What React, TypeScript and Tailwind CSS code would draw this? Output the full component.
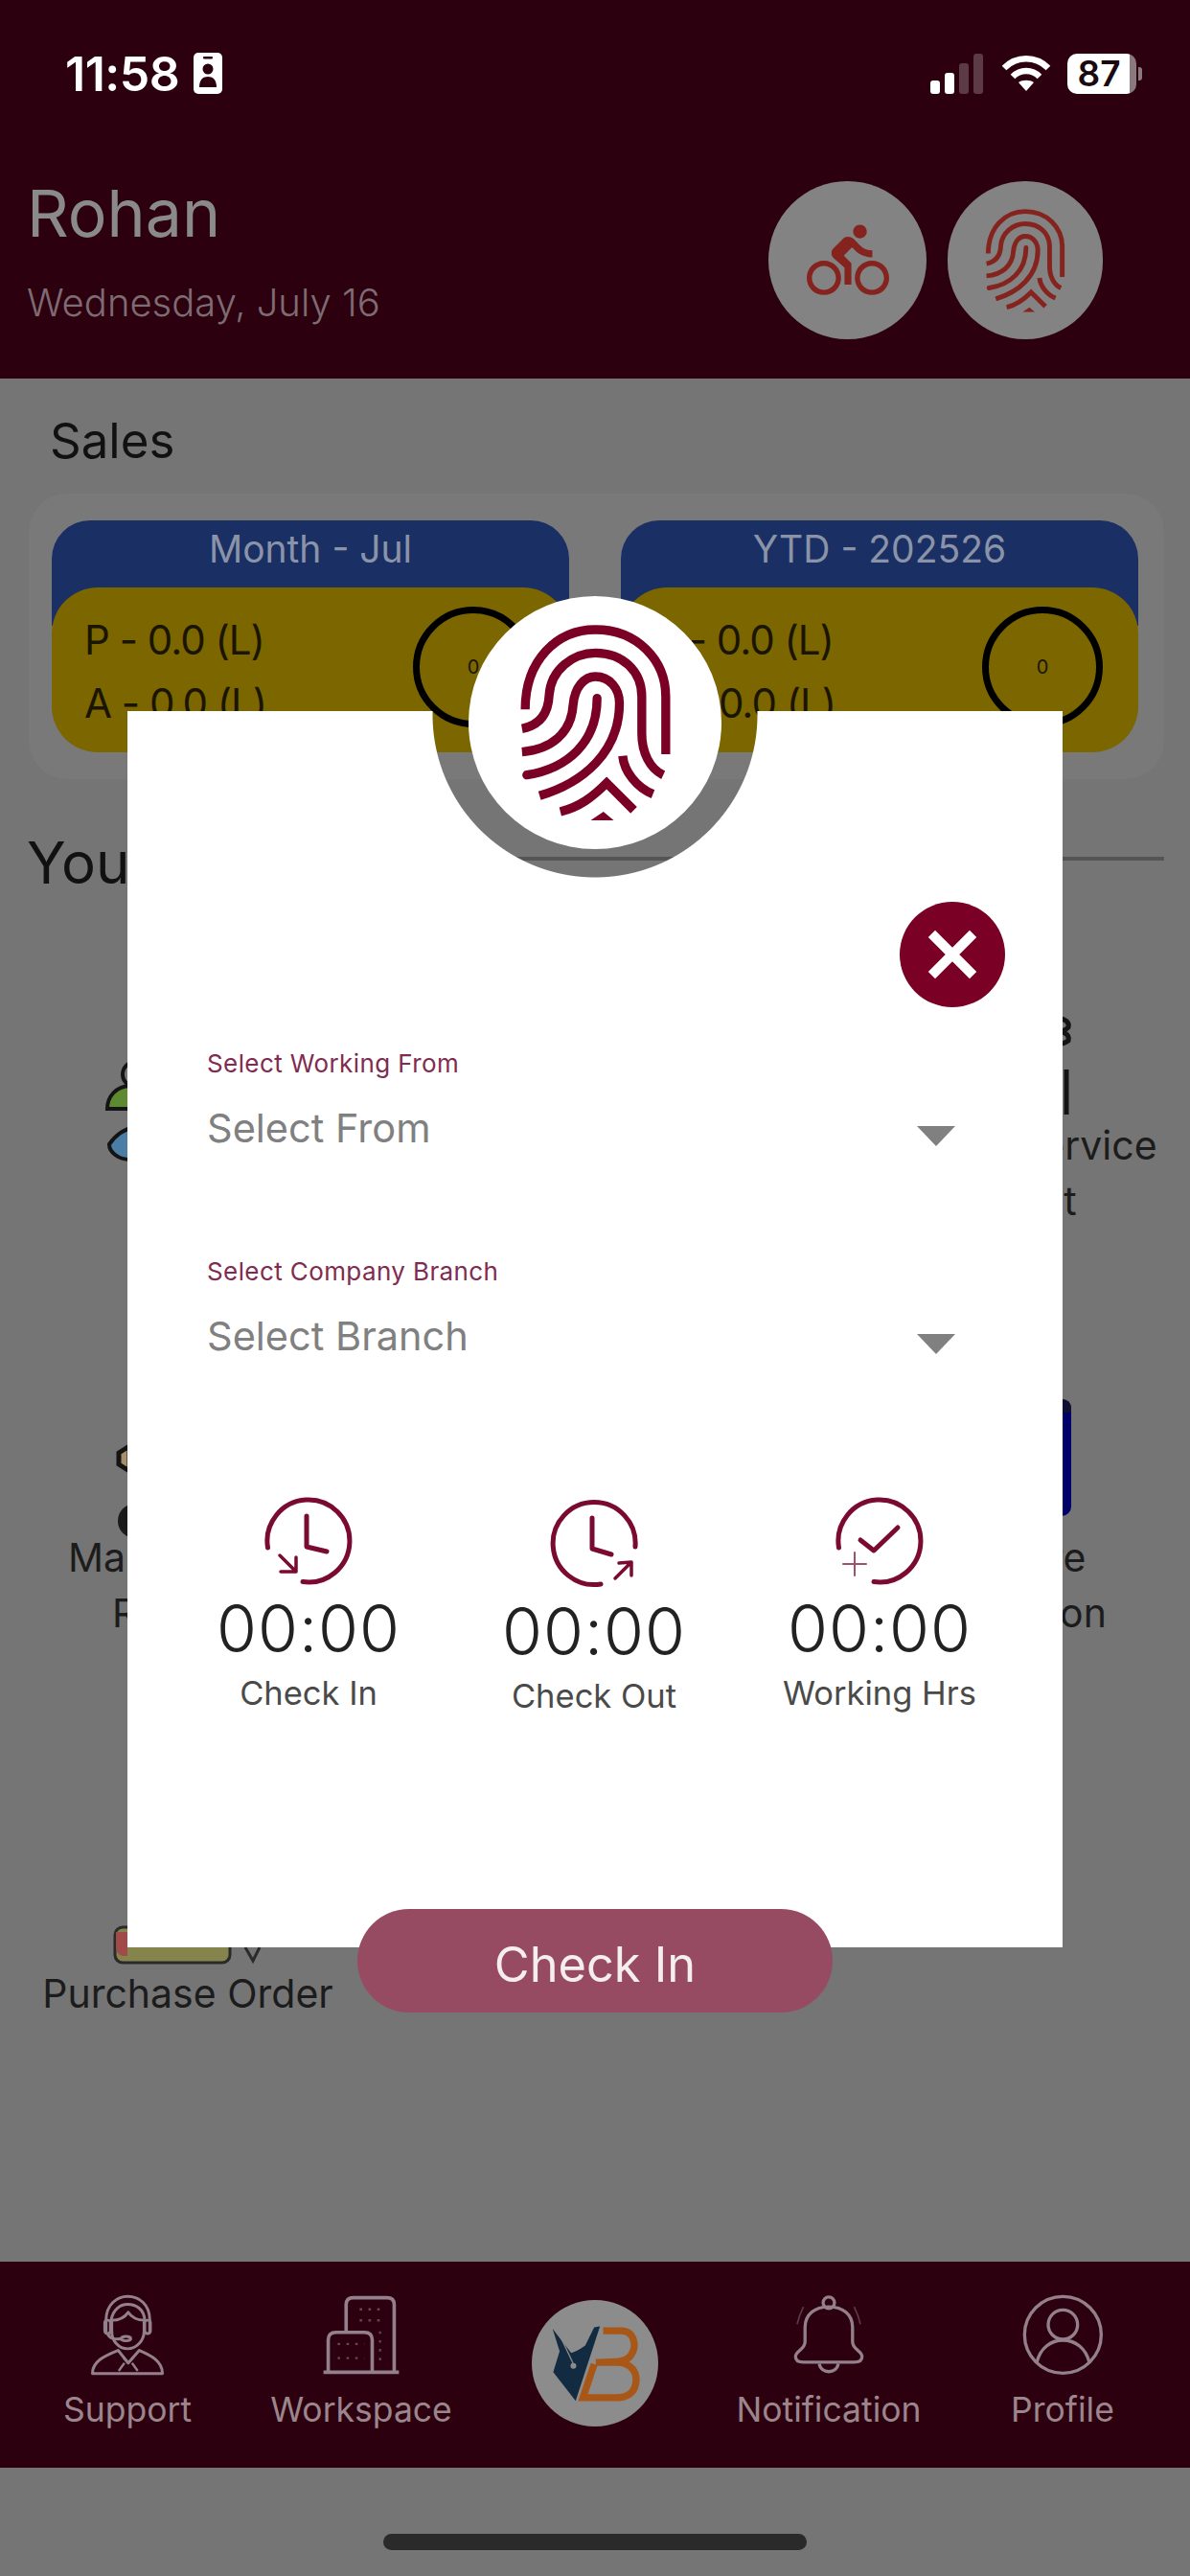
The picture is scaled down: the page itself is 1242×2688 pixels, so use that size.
import React from "react";
import { MdDirectionsBike } from "react-icons/md";

function Fingerprint({ color, className }: { color: string; className: string }) {
  return (
    <svg viewBox="305 120 470 615" className={className} fill="none" stroke={color} strokeWidth={28}>
      <path d="M320 385 C320 230 420 135 540 135 C670 135 760 230 760 345 V525" />
      <path d="M310 445 C365 435 392 400 395 340 C400 260 470 208 540 208 C625 208 685 265 685 345 V460 C685 520 710 570 752 590" />
      <path d="M310 518 C400 510 465 460 470 370 C475 315 505 282 540 282 C585 282 615 320 615 365 C615 520 500 615 365 655" />
      <path d="M325 590 C450 570 545 490 545 350" strokeLinecap="round" />
      <path d="M625 530 C630 580 670 630 720 650" />
      <path d="M430 705 C490 690 530 660 575 615 L660 700" />
      <path d="M525 732 L565 705 L597 732 Z" fill={color} stroke="none" />
    </svg>
  );
}

function ClockIn() {
  return (
    <svg viewBox="0 0 92 92" className="w-[92px] h-[92px]" fill="none" stroke="#7a0a32" strokeWidth={5} strokeLinecap="round" strokeLinejoin="round">
      <path d="M3.5 53 A43 43 0 1 1 40 88.6" />
      <path d="M44 20 V52 L65 57" />
      <path d="M16 61 L33 78 M17 78 H33 V63" strokeWidth={3.5} />
    </svg>
  );
}
function ClockOut() {
  return (
    <svg viewBox="0 0 92 92" className="w-[92px] h-[92px]" fill="none" stroke="#7a0a32" strokeWidth={5} strokeLinecap="round" strokeLinejoin="round">
      <path d="M89 49 A43 43 0 1 0 53 88" />
      <path d="M44 19 V51 L64 57" />
      <path d="M68 82 L85 65 M72 66 L85 65 V79" strokeWidth={3.5} />
    </svg>
  );
}
function ClockCheck() {
  return (
    <svg viewBox="0 0 92 92" className="w-[92px] h-[92px]" fill="none" stroke="#7a0a32" strokeWidth={5} strokeLinecap="round" strokeLinejoin="round">
      <path d="M3.5 53 A43 43 0 1 1 40 88.6" />
      <path d="M26 45 L40 56 L65 32" />
      <path d="M20 58 V82 M8 70 H32" strokeWidth={2} stroke="#a0506c" />
    </svg>
  );
}

const navStroke = "#94808a";

function SupportIcon() {
  return (
    <svg viewBox="190 65 235 260" className="w-[78px] h-[86px]" fill="none" stroke={navStroke} strokeWidth={9} strokeLinejoin="round">
      <path d="M240 190 V150 C240 100 275 75 308 75 C345 75 378 100 378 150 V190" />
      <path d="M256 150 C262 115 285 100 308 100 C335 100 360 115 362 150" />
      <path d="M258 150 C280 150 300 140 310 125 C320 140 340 150 360 150 V185 C360 215 335 240 308 240 C280 240 258 215 258 185 Z" />
      <rect x="236" y="150" width="18" height="42" rx="8" />
      <rect x="362" y="150" width="18" height="42" rx="8" />
      <path d="M245 192 C250 208 270 212 290 208" />
      <ellipse cx="303" cy="208" rx="15" ry="7" />
      <path d="M197 318 C197 280 235 262 278 245 L310 285 L345 245 C385 262 418 280 418 318 Z" />
      <path d="M295 268 L310 285 L325 268 M298 285 L280 310 M322 285 L340 310" strokeWidth={7} />
    </svg>
  );
}
function WorkspaceIcon() {
  return (
    <svg viewBox="915 65 250 260" className="w-[82px] h-[86px]" fill="none" stroke={navStroke} strokeWidth={11}>
      <path d="M992 185 V100 Q992 78 1015 78 H1122 Q1145 78 1145 100 V312" />
      <path d="M935 312 V212 Q935 188 960 188 H1050 Q1075 188 1075 212 V312" />
      <path d="M920 315 H1160" strokeWidth={12} />
      <path d="M1035 115 H1115 M1035 150 H1115 M1100 185 V290 M965 225 H1050 M965 270 H1050" strokeWidth={7} strokeDasharray="8 20" opacity={0.55} />
    </svg>
  );
}
function BellIcon() {
  return (
    <svg viewBox="200 65 230 255" className="w-[76px] h-[86px]" fill="none" stroke={navStroke} strokeWidth={10} strokeLinejoin="round">
      <circle cx="315" cy="92" r="18" />
      <path d="M240 215 C240 240 210 245 210 262 C210 275 220 280 235 280 H395 C410 280 420 275 420 262 C420 245 390 240 390 215 V170 C390 130 360 105 315 105 C270 105 240 130 240 170 Z" />
      <path d="M285 285 C290 318 340 318 345 285" />
      <path d="M215 160 Q222 130 235 105 M415 160 Q408 130 395 105" strokeWidth={5} opacity={0.45} />
    </svg>
  );
}
function ProfileIcon() {
  return (
    <svg viewBox="920 70 255 255" className="w-[85px] h-[85px]" fill="none" stroke={navStroke} strokeWidth={10}>
      <circle cx="1047" cy="197" r="120" />
      <circle cx="1047" cy="165" r="46" />
      <path d="M965 285 C975 238 1010 214 1047 214 C1085 214 1120 238 1130 285" />
    </svg>
  );
}
function Logo() {
  return (
    <div className="w-[132px] h-[132px] rounded-full bg-[#8c8c8c] flex items-center justify-center">
      <svg viewBox="105 90 395 395" className="w-[132px] h-[132px]">
        <path d="M170 180 L228 255 C245 250 262 240 272 232 L300 175 L318 172 L242 405 L172 315 L192 250 Z" fill="#122b40" />
        <path d="M190 195 L235 290" stroke="#8c8c8c" strokeWidth={4} />
        <circle cx="235" cy="296" r="9" fill="#8c8c8c" />
        <path d="M328 186 H385 C425 186 435 235 415 262 C400 283 380 285 305 285 M305 285 H370 C420 285 435 320 430 350 C425 385 395 395 370 395 H265 L300 290" fill="none" stroke="#a95716" strokeWidth={22} />
      </svg>
    </div>
  );
}

function PeopleIcon() {
  return (
    <svg viewBox="0 0 170 130" className="w-[170px] h-[130px] overflow-visible" fill="none" stroke="#141414" strokeWidth={4}>
      <circle cx="30" cy="85" r="13" />
      <path d="M1 121 C1 108 10 98 24 97 H60 V121 Z" fill="#5d8a30" />
      <path d="M3 158 C10 148 18 142 30 140 L60 140 V174 H25 C12 174 3 166 3 158 Z" fill="#4a7ea5" />
    </svg>
  );
}
function MaintIcon() {
  return (
    <svg viewBox="0 0 170 130" className="w-[170px] h-[130px] overflow-visible">
      <path d="M13 50 L24 43 V69 L13 62 Z" fill="#a5906a" stroke="#141414" strokeWidth={5} />
      <circle cx="30" cy="121" r="18" fill="#1a1a1a" />
    </svg>
  );
}
function PurchaseIcon() {
  return (
    <svg viewBox="0 0 170 130" className="w-[170px] h-[130px]" fill="none">
      <rect x="9" y="90" width="120" height="37" rx="8" fill="#84844c" stroke="#2a2a2a" strokeWidth={3} />
      <path d="M10 95 H22 V120 H17 Q10 118 10 110 Z" fill="#a04a4a" />
      <path d="M145 111 L153 125 L160 111" stroke="#2a2a2a" strokeWidth={3} />
    </svg>
  );
}
function ServiceIcon() {
  return (
    <svg viewBox="0 0 170 130" className="w-[170px] h-[130px]" fill="none" stroke="#141414" strokeWidth={5}>
      <path d="M106 26 Q120 28 118 36 Q114 40 108 40 Q120 42 118 50 Q112 54 106 54" />
      <path d="M116 80 V127" />
    </svg>
  );
}
function BlueIcon() {
  return (
    <svg viewBox="0 0 170 130" className="w-[170px] h-[130px] overflow-visible">
      <rect x="40" y="-6" width="81" height="122" rx="10" fill="#00006b" />
      <path d="M100 -6 H111 Q121 -6 121 4 V8 H100 Z" fill="#101030" />
    </svg>
  );
}

function SalesCard({ title, gauge }: { title: string; gauge: string }) {
  return (
    <div className="w-[540px] h-[242px] flex flex-col">
      <div className="h-[110px] rounded-t-[40px] bg-[#1a2f63] flex items-start justify-center pt-[11px] text-[39px] leading-[38px] text-[#8a93a8]">{title}</div>
      <div className="mt-[-40px] flex-1 rounded-[48px] bg-[#7c6600] flex items-center justify-between pl-[34px] pr-[37px] text-[#1a1500]">
        <div className="flex flex-col gap-[20px] text-[42px] leading-[46px] tracking-[-1px] mt-[4px]">
          <div>P - 0.0 (L)</div>
          <div>A - 0.0 (L)</div>
        </div>
        <div className="w-[126px] h-[126px] rounded-full border-[7px] border-black flex items-center justify-center text-[20px] mb-[6px]">{gauge}</div>
      </div>
    </div>
  );
}

function GridItem({ icon, lines }: { icon: React.ReactNode; lines: string[] }) {
  return (
    <div className="flex flex-col items-center text-center text-[41px] leading-[58px] text-[#1c1c1c]">
      <div className="h-[130px]">{icon}</div>
      {lines.map((l) => (
        <div key={l} className="whitespace-nowrap">{l}</div>
      ))}
    </div>
  );
}

function NavItem({ icon, label }: { icon: React.ReactNode; label: string }) {
  return (
    <div className="flex flex-col items-center pt-[33px]">
      <div className="h-[86px] flex items-center">{icon}</div>
      <div className="mt-[14px] text-[35.5px] leading-[44px] text-[#9a868c]">{label}</div>
    </div>
  );
}

function TimeCol({ icon, time, label, offset }: { icon: React.ReactNode; time: string; label: string; offset: string }) {
  return (
    <div className={`flex flex-col items-center ${offset}`}>
      {icon}
      <div className="mt-[10px] text-[68px] leading-[70px] font-light text-[#222] tracking-[1px]">{time}</div>
      <div className="mt-[13px] text-[34.5px] leading-[40px] text-[#4a4a4a]">{label}</div>
    </div>
  );
}

function SelectField({ label, value }: { label: string; value: string }) {
  return (
    <div className="pl-[83px] pr-[112px]">
      <div className="text-[26px] leading-[30px] tracking-[0.4px] text-[#7f2c50]">{label}</div>
      <div className="mt-[27px] flex items-center justify-between">
        <div className="text-[41.5px] leading-[50px] text-[#808080]">{value}</div>
        <div className="mt-[16px] w-0 h-0 border-l-[20px] border-r-[20px] border-t-[21px] border-l-transparent border-r-transparent border-t-[#808080]" />
      </div>
    </div>
  );
}

export default function App() {
  return (
    <div className="relative w-[1242px] h-[2688px] overflow-hidden bg-[#757575] flex flex-col font-['Inter',sans-serif]">
      <header className="h-[395px] shrink-0 bg-[#2d0010]">
        <div className="h-[43px] mt-[55px] pl-[68px] pr-[50px] flex items-center justify-between text-white">
          <div className="flex items-center gap-[15px]">
            <span className="text-[50px] leading-none font-semibold tracking-[-0.5px]">11:58</span>
            <svg viewBox="0 0 30 43" className="w-[30px] h-[43px]">
              <rect width="30" height="43" rx="5" fill="#fff" />
              <rect x="10" y="4" width="10" height="2.5" rx="1" fill="#2d0010" />
              <circle cx="15" cy="17" r="5.5" fill="#2d0010" />
              <path d="M6 36 C6 28 10 25 15 25 C20 25 24 28 24 36 Z" fill="#2d0010" />
            </svg>
          </div>
          <div className="flex items-center gap-[17px]">
            <svg viewBox="0 0 57 42" className="w-[57px] h-[42px]">
              <rect x="0" y="28" width="10" height="14" rx="3" fill="#fff" />
              <rect x="15" y="20" width="10" height="22" rx="3" fill="#fff" />
              <rect x="30" y="10" width="10" height="32" rx="3" fill="#5c3a46" />
              <rect x="45" y="0" width="10" height="42" rx="3" fill="#5c3a46" />
            </svg>
            <svg viewBox="0 0 52 40" className="w-[52px] h-[40px]" fill="none" stroke="#fff" strokeWidth={6.5}>
              <path d="M3 14 C16 1 36 1 49 14" />
              <path d="M12 23 C20 15 32 15 40 23" />
              <path d="M26 38 L18 29 C22 26 30 26 34 29 Z" fill="#fff" stroke="none" />
            </svg>
            <div className="flex items-center">
              <div className="w-[72px] h-[42px] rounded-[10px] bg-[linear-gradient(90deg,#fff_90%,#8a7a80_90%)] flex items-center justify-center text-[#1a0a10] text-[37px] leading-none font-semibold pr-[6px]">87</div>
              <div className="ml-[2px] w-[4px] h-[14px] rounded-r-[3px] bg-[#8a7a80]" />
            </div>
          </div>
        </div>
        <div className="mt-[89px] pl-[28px] pr-[91px] flex justify-between">
          <div>
            <div className="text-[68px] leading-[70px] text-[#8a8a8a]">Rohan</div>
            <div className="mt-[34px] text-[40px] leading-[50px] font-light text-[#7d6c72]">Wednesday, July 16</div>
          </div>
          <div className="flex gap-[22px] mt-[2px]">
            <div className="w-[165px] h-[165px] rounded-full bg-[#838383] flex items-center justify-center">
              <MdDirectionsBike className="w-[86px] h-[86px] text-[#85241f]" />
            </div>
            <div className="w-[162px] h-[165px] rounded-full bg-[#838383] flex items-center justify-center">
              <Fingerprint color="#85241f" className="w-[84px] h-[108px]" />
            </div>
          </div>
        </div>
      </header>

      <main className="flex-1 min-h-0">
        <div className="pt-[35px] pl-[52px] text-[51px] leading-[60px] text-[#111]">Sales</div>
        <div className="mt-[25px] ml-[30px] mr-[27px] h-[298px] rounded-[40px] bg-[#797979] pt-[28px] pl-[24px] pr-[27px] flex justify-between">
          <SalesCard title="Month - Jul" gauge="0" />
          <SalesCard title="YTD - 202526" gauge="0" />
        </div>
        <div className="mt-[51px] pl-[28px] pr-[27px] flex items-center gap-[20px]">
          <div className="text-[60px] leading-[72px] text-[#111]">Your Services</div>
          <div className="flex-1 h-[4px] bg-[#555] mb-[8px]" />
        </div>
        <div className="pl-[20px] pt-[100px] grid grid-cols-[352px_352px_352px] grid-rows-[430px_455px_auto] gap-x-[91px]">
          <GridItem icon={<PeopleIcon />} lines={[]} />
          <div />
          <GridItem icon={<ServiceIcon />} lines={["Field Service", "Visit"]} />
          <GridItem icon={<MaintIcon />} lines={["Maintenance", "Request"]} />
          <div />
          <GridItem icon={<BlueIcon />} lines={["Store", "Section"]} />
          <GridItem icon={<PurchaseIcon />} lines={["Purchase Order"]} />
        </div>
      </main>

      <footer className="h-[215px] shrink-0 bg-[#2d0010] px-[11px] grid grid-cols-5">
        <NavItem icon={<SupportIcon />} label="Support" />
        <NavItem icon={<WorkspaceIcon />} label="Workspace" />
        <div className="flex justify-center pt-[40px]">
          <Logo />
        </div>
        <NavItem icon={<BellIcon />} label="Notification" />
        <NavItem icon={<ProfileIcon />} label="Profile" />
      </footer>
      <div className="h-[113px] shrink-0 pt-[69px] flex justify-center">
        <div className="w-[442px] h-[17px] rounded-full bg-[#2a2a2a]" />
      </div>

      <div className="absolute left-[133px] top-[742px] w-[976px] h-[1290px] bg-[radial-gradient(circle_at_488px_4px,transparent_169px,white_170px)] flex flex-col">
        <div className="absolute left-[356px] top-[-120px] w-[264px] h-[264px] rounded-full bg-white flex items-center justify-center">
          <Fingerprint color="#7a0026" className="w-[157px] h-[205px]" />
        </div>
        <div className="mt-[199px] pr-[60px] flex justify-end">
          <div className="w-[110px] h-[110px] rounded-full bg-[#7a0026] flex items-center justify-center">
            <svg viewBox="0 0 50 50" className="w-[54px] h-[54px]" stroke="#fff" strokeWidth={9.5}>
              <path d="M5 5 L45 45 M45 5 L5 45" />
            </svg>
          </div>
        </div>
        <div className="mt-[44px]">
          <SelectField label="Select Working From" value="Select From" />
        </div>
        <div className="mt-[110px]">
          <SelectField label="Select Company Branch" value="Select Branch" />
        </div>
        <div className="mt-[143px] pl-[40px] grid grid-cols-[298px_298px_298px]">
          <TimeCol icon={<ClockIn />} time="00:00" label="Check In" offset="" />
          <TimeCol icon={<ClockOut />} time="00:00" label="Check Out" offset="mt-[3px]" />
          <TimeCol icon={<ClockCheck />} time="00:00" label="Working Hrs" offset="" />
        </div>
        <div className="mt-auto mb-[-68px] self-center w-[496px] h-[108px] rounded-full bg-[#974b63] flex items-center justify-center pt-[8px] text-[50.5px] leading-none text-[#f5eef0]">
          Check In
        </div>
      </div>
    </div>
  );
}
